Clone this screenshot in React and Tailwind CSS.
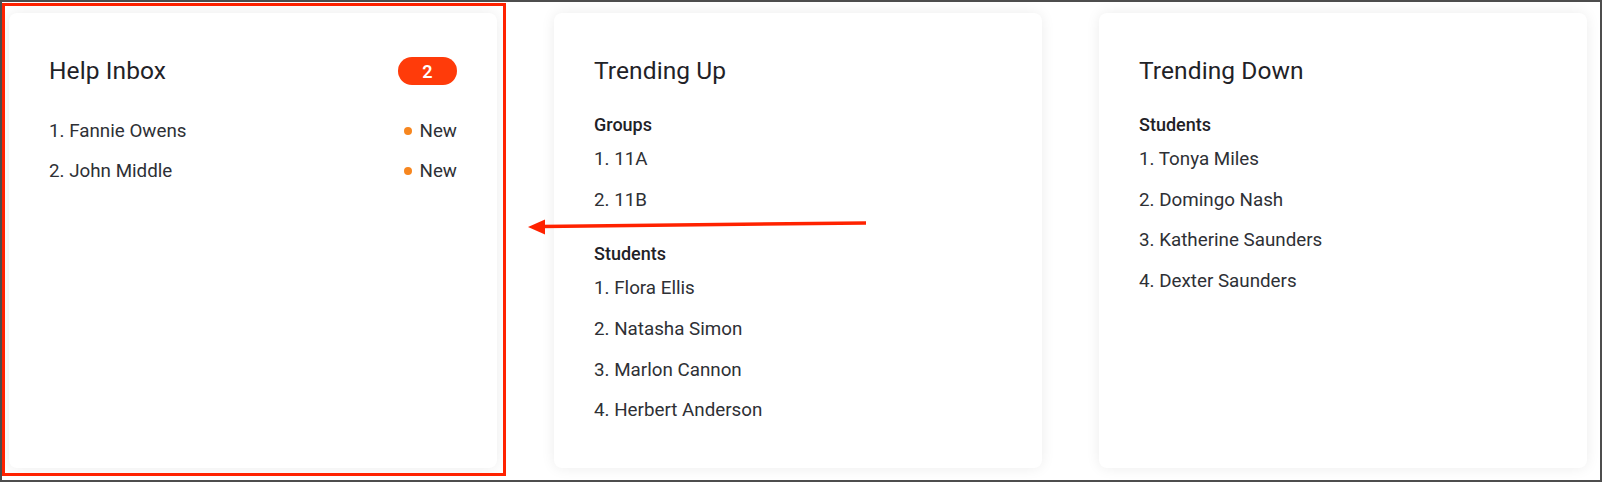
import React from 'react';

const font = { fontFamily: 'Roboto, "Noto Sans", sans-serif' };

const Card = ({ children }) => (
  <div className="w-[488px] h-[455px] shrink-0 rounded-lg bg-white px-10 pt-[44px] shadow-[0_0_14px_rgba(0,0,0,0.08)]">
    {children}
  </div>
);

const Title = ({ children }) => (
  <h2 className="text-[24.5px] leading-7 tracking-[0.1px] text-[#1f2227]">{children}</h2>
);

const Section = ({ label, items, className }) => (
  <div className={className}>
    <div className="h-6 text-[18px] leading-6 font-medium text-[#1f2227]">{label}</div>
    <ul className="mt-[2px]">
      {items.map((item, i) => (
        <li key={item} className="h-[40.7px] text-[18.8px] leading-[40px] text-[#2e3035]">
          {i + 1}. {item}
        </li>
      ))}
    </ul>
  </div>
);

const inbox = ['Fannie Owens', 'John Middle'];

export default function App() {
  return (
    <div
      style={font}
      className="relative flex w-[1602px] h-[482px] gap-[57px] overflow-hidden border-2 border-[#4d4d4d] bg-white pl-[7px] pt-[11px]"
    >
      <Card>
        <div className="flex h-7 items-center justify-between">
          <Title>Help Inbox</Title>
          <span className="flex h-7 w-[59px] items-center justify-center rounded-full bg-[#ff3b0a] text-[18px] font-semibold text-white">
            2
          </span>
        </div>
        <ul className="mt-[26px]">
          {inbox.map((name, i) => (
            <li key={name} className="flex h-10 items-center justify-between text-[18.8px] text-[#2e3035]">
              <span>{i + 1}. {name}</span>
              <span className="flex items-center gap-2">
                <span className="h-2 w-2 rounded-full bg-[#f7861f]" />
                New
              </span>
            </li>
          ))}
        </ul>
      </Card>

      <Card>
        <Title>Trending Up</Title>
        <Section className="mt-[28px]" label="Groups" items={['11A', '11B']} />
        <Section
          className="mt-[22px]"
          label="Students"
          items={['Flora Ellis', 'Natasha Simon', 'Marlon Cannon', 'Herbert Anderson']}
        />
      </Card>

      <Card>
        <Title>Trending Down</Title>
        <Section
          className="mt-[28px]"
          label="Students"
          items={['Tonya Miles', 'Domingo Nash', 'Katherine Saunders', 'Dexter Saunders']}
        />
      </Card>

      {/* annotation overlay */}
      <div className="pointer-events-none absolute left-0 top-[1px] h-[473px] w-[504px] border-[3px] border-[#ff2200]" />
      <svg
        className="pointer-events-none absolute left-[518px] top-[208px]"
        width="360"
        height="30"
        viewBox="0 0 360 30"
      >
        <line x1="22" y1="16.5" x2="346" y2="13" stroke="#ff2200" strokeWidth="3.5" />
        <polygon points="8,17 25,9.5 25,24.5" fill="#ff2200" />
      </svg>
    </div>
  );
}
